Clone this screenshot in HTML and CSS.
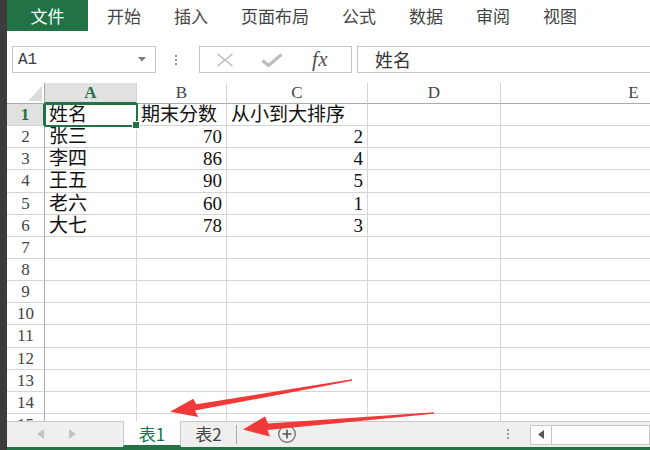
FILE: index.html
```html
<!DOCTYPE html>
<html lang="zh-CN">
<head>
<meta charset="utf-8">
<title>Excel</title>
<link rel="stylesheet" href="styles.css">
</head>
<body>
<div class="app">
  <div class="edge"></div>
  <div class="main">
    <nav class="ribbon">
      <span class="file">文件</span>
      <span class="tab">开始</span>
      <span class="tab">插入</span>
      <span class="tab">页面布局</span>
      <span class="tab">公式</span>
      <span class="tab">数据</span>
      <span class="tab">审阅</span>
      <span class="tab">视图</span>
    </nav>
    <div class="fbar">
      <div class="namebox">
        <span class="ref">A1</span>
        <svg class="caret" width="8" height="5" viewBox="0 0 8 5"><path d="M0 0H8L4 4.5Z" fill="#7a7a7a"/></svg>
      </div>
      <div class="vdots"><i></i><i></i><i></i></div>
      <div class="btns">
        <svg class="xicon" width="18" height="14" viewBox="0 0 18 14"><path d="M1.5 1L16.5 13M16.5 1L1.5 13" stroke="#bcbcbc" stroke-width="1.6" fill="none"/></svg>
        <svg class="chk" width="22" height="14" viewBox="0 0 22 14"><path d="M1.5 7.5L7.5 12.5L20.5 1.5" stroke="#bcbcbc" stroke-width="3" fill="none" stroke-linejoin="round"/></svg>
        <span class="fx">fx</span>
      </div>
      <div class="finput">姓名</div>
    </div>
    <div class="sheet">
      <div class="grid">
        <div class="corner"><svg width="14" height="15" viewBox="0 0 14 15"><path d="M14 0V15H0Z" fill="#dcdcdc"/></svg></div>
        <div class="ch sel">A</div>
        <div class="ch">B</div>
        <div class="ch">C</div>
        <div class="ch">D</div>
        <div class="ch">E</div>

        <div class="rh sel">1</div>
        <div class="c active">姓名</div>
        <div class="c">期末分数</div>
        <div class="c">从小到大排序</div>
        <div class="c"></div>
        <div class="c"></div>

        <div class="rh">2</div>
        <div class="c">张三</div>
        <div class="c n">70</div>
        <div class="c n">2</div>
        <div class="c"></div>
        <div class="c"></div>

        <div class="rh">3</div>
        <div class="c">李四</div>
        <div class="c n">86</div>
        <div class="c n">4</div>
        <div class="c"></div>
        <div class="c"></div>

        <div class="rh">4</div>
        <div class="c">王五</div>
        <div class="c n">90</div>
        <div class="c n">5</div>
        <div class="c"></div>
        <div class="c"></div>

        <div class="rh">5</div>
        <div class="c">老六</div>
        <div class="c n">60</div>
        <div class="c n">1</div>
        <div class="c"></div>
        <div class="c"></div>

        <div class="rh">6</div>
        <div class="c">大七</div>
        <div class="c n">78</div>
        <div class="c n">3</div>
        <div class="c"></div>
        <div class="c"></div>

        <div class="rh">7</div><div class="c"></div><div class="c"></div><div class="c"></div><div class="c"></div><div class="c"></div>
        <div class="rh">8</div><div class="c"></div><div class="c"></div><div class="c"></div><div class="c"></div><div class="c"></div>
        <div class="rh">9</div><div class="c"></div><div class="c"></div><div class="c"></div><div class="c"></div><div class="c"></div>
        <div class="rh">10</div><div class="c"></div><div class="c"></div><div class="c"></div><div class="c"></div><div class="c"></div>
        <div class="rh">11</div><div class="c"></div><div class="c"></div><div class="c"></div><div class="c"></div><div class="c"></div>
        <div class="rh">12</div><div class="c"></div><div class="c"></div><div class="c"></div><div class="c"></div><div class="c"></div>
        <div class="rh">13</div><div class="c"></div><div class="c"></div><div class="c"></div><div class="c"></div><div class="c"></div>
        <div class="rh">14</div><div class="c"></div><div class="c"></div><div class="c"></div><div class="c"></div><div class="c"></div>
        <div class="rh">15</div><div class="c"></div><div class="c"></div><div class="c"></div><div class="c"></div><div class="c"></div>
      </div>
    </div>
    <div class="tabsbar">
      <div class="nav">
        <svg width="7" height="10" viewBox="0 0 7 10"><path d="M7 0V10L0 5Z" fill="#c4c4c4"/></svg>
        <svg width="7" height="10" viewBox="0 0 7 10"><path d="M0 0V10L7 5Z" fill="#c4c4c4"/></svg>
      </div>
      <div class="stab on">表1</div>
      <div class="stab">表2</div>
      <div class="addsheet">
        <svg width="20" height="20" viewBox="0 0 20 20"><circle cx="10" cy="10" r="8.3" fill="none" stroke="#7a7a7a" stroke-width="1.4"/><path d="M10 5.5V14.5M5.5 10H14.5" stroke="#555" stroke-width="1.6"/></svg>
      </div>
      <div class="spacer"></div>
      <div class="vdots small"><i></i><i></i><i></i></div>
      <div class="hscroll">
        <div class="harrow"><svg width="6" height="9" viewBox="0 0 6 9"><path d="M6 0V9L0 4.5Z" fill="#555"/></svg></div>
        <div class="thumb"></div>
      </div>
    </div>
    <div class="foot"></div>
  </div>
  <svg class="arrows" width="650" height="450" viewBox="0 0 650 450">
    <path d="M352 379.3L196.2 404.3L193.3 398.8L170 411.8L198.3 417L195 410.6L352 380.8Z" fill="#f03a3a"/>
    <path d="M434 412.3L268 423.6L265 416.5L243 429.6L270 436.6L267.4 430L434 413.8Z" fill="#f03a3a"/>
  </svg>
</div>
</body>
</html>
```
FILE: styles.css
```css
* { box-sizing: border-box; }
html, body { margin: 0; padding: 0; }
body {
  width: 650px;
  height: 450px;
  overflow: hidden;
  background: #fff;
  font-family: "Noto Sans CJK SC", "Liberation Sans", sans-serif;
}
.app {
  position: relative;
  width: 650px;
  height: 450px;
  display: flex;
  overflow: hidden;
}
.edge {
  width: 7px;
  flex: none;
  background: #3c3c3c;
}
.main {
  flex: 1;
  min-width: 0;
  display: flex;
  flex-direction: column;
  overflow: hidden;
}

/* ribbon */
.ribbon {
  height: 31px;
  flex: none;
  display: flex;
  align-items: center;
  gap: 33px;
  font-size: 17px;
  color: #444;
  white-space: nowrap;
}
.file {
  width: 81px;
  height: 31px;
  background: #217346;
  color: #fff;
  display: flex;
  align-items: center;
  justify-content: center;
  margin-right: -14px;
}
.tab { line-height: 31px; }

/* formula bar */
.fbar {
  height: 52px;
  flex: none;
  display: flex;
  align-items: flex-start;
  padding-top: 15px;
  padding-left: 5px;
}
.namebox {
  width: 144px;
  height: 27px;
  border: 1px solid #c6c6c6;
  display: flex;
  align-items: center;
  justify-content: space-between;
  padding: 0 9px 0 5px;
}
.ref {
  font-family: "Liberation Mono", monospace;
  font-size: 16px;
  color: #3a3a3a;
}
.vdots {
  width: 20px;
  height: 27px;
  margin-left: 10px;
  display: flex;
  flex-direction: column;
  align-items: center;
  justify-content: center;
  gap: 2px;
}
.vdots i {
  display: block;
  width: 2px;
  height: 2px;
  background: #9a9a9a;
}
.btns {
  width: 153px;
  height: 27px;
  margin-left: 13px;
  border: 1px solid #c6c6c6;
  display: flex;
  align-items: center;
}
.xicon { margin-left: 16px; }
.chk { margin-left: 27px; }
.fx {
  margin-left: 29px;
  font-family: "Liberation Serif", serif;
  font-style: italic;
  font-size: 21px;
  line-height: 25px;
  color: #505050;
  letter-spacing: 0.5px;
}
.finput {
  flex: 1;
  height: 27px;
  margin-left: 5px;
  border: 1px solid #c6c6c6;
  border-right: none;
  padding-left: 17px;
  font-size: 18px;
  line-height: 25px;
  color: #333;
}

/* sheet */
.sheet {
  flex: 1;
  min-height: 0;
  overflow: hidden;
}
.grid {
  display: grid;
  grid-template-columns: 38px 92px 90px 141px 133px 266px;
  grid-template-rows: 21px repeat(15, 22.15px);
  width: 760px;
}
.corner {
  border-right: 1px solid #ababab;
  border-bottom: 1px solid #ababab;
  display: flex;
  align-items: flex-end;
  justify-content: flex-end;
  padding: 0 2px 2px 0;
}
.ch {
  border-right: 1px solid #d4d4d4;
  border-bottom: 1px solid #ababab;
  font-family: "Liberation Serif", serif;
  font-size: 17px;
  line-height: 20px;
  color: #444;
  text-align: center;
}
.ch.sel {
  background: #e1e1e1;
  color: #217346;
  font-weight: bold;
  border-bottom: 2px solid #217346;
}
.rh {
  border-right: 1px solid #ababab;
  border-bottom: 1px solid #d4d4d4;
  font-family: "Liberation Serif", serif;
  font-size: 17px;
  line-height: 22px;
  color: #444;
  text-align: center;
}
.rh.sel {
  background: #e1e1e1;
  color: #217346;
  font-weight: bold;
  border-right: 2px solid #217346;
}
.c {
  border-right: 1px solid #d4d4d4;
  border-bottom: 1px solid #d4d4d4;
  font-family: "Liberation Serif", "Noto Sans CJK SC", serif;
  font-size: 19px;
  line-height: 22px;
  color: #111;
  padding: 0 4px 0 4px;
  white-space: nowrap;
}
.c.n { text-align: right; padding-right: 4px; }
.c.active {
  position: relative;
  z-index: 1;
  outline: 2px solid #217346;
  outline-offset: -1px;
}
.c.active::after {
  content: "";
  position: absolute;
  right: -4px;
  bottom: -4px;
  width: 6px;
  height: 6px;
  background: #217346;
  border: 1px solid #fff;
}

/* sheet tabs */
.tabsbar {
  height: 26px;
  flex: none;
  display: flex;
  align-items: stretch;
  background: #efefef;
  box-shadow: inset 0 1px 0 #c9c9c9;
}
.nav {
  width: 116px;
  display: flex;
  align-items: center;
  padding-left: 30px;
  gap: 25px;
}
.stab {
  width: 58px;
  display: flex;
  align-items: center;
  justify-content: center;
  font-size: 17px;
  color: #444;
  padding-bottom: 1px;
}
.stab.on {
  background: #fff;
  color: #217346;
  border-left: 1px solid #c6c6c6;
  border-right: 1px solid #c6c6c6;
  border-bottom: 2px solid #217346;
  padding-bottom: 0;
}
.stab:not(.on) {
  width: 56px;
  border-right: 1px solid #a8a8a8;
  margin: 4px 0 3px;
  padding-bottom: 2px;
}
.addsheet {
  display: flex;
  align-items: center;
  margin-left: 40px;
}
.spacer { flex: 1; }
.vdots.small {
  height: auto;
  width: 6px;
  margin: 0 19px 0 0;
}
.hscroll {
  width: 120px;
  height: 20px;
  align-self: center;
  margin-top: 1px;
  background: #fff;
  border: 1px solid #c6c6c6;
  display: flex;
}
.harrow {
  width: 21px;
  display: flex;
  align-items: center;
  justify-content: center;
  border-right: 1px solid #c6c6c6;
}
.thumb { flex: 1; }
.foot {
  height: 3px;
  flex: none;
  background: #217346;
}

/* annotation arrows */
.arrows {
  position: absolute;
  left: 0;
  top: 0;
  pointer-events: none;
}
```
